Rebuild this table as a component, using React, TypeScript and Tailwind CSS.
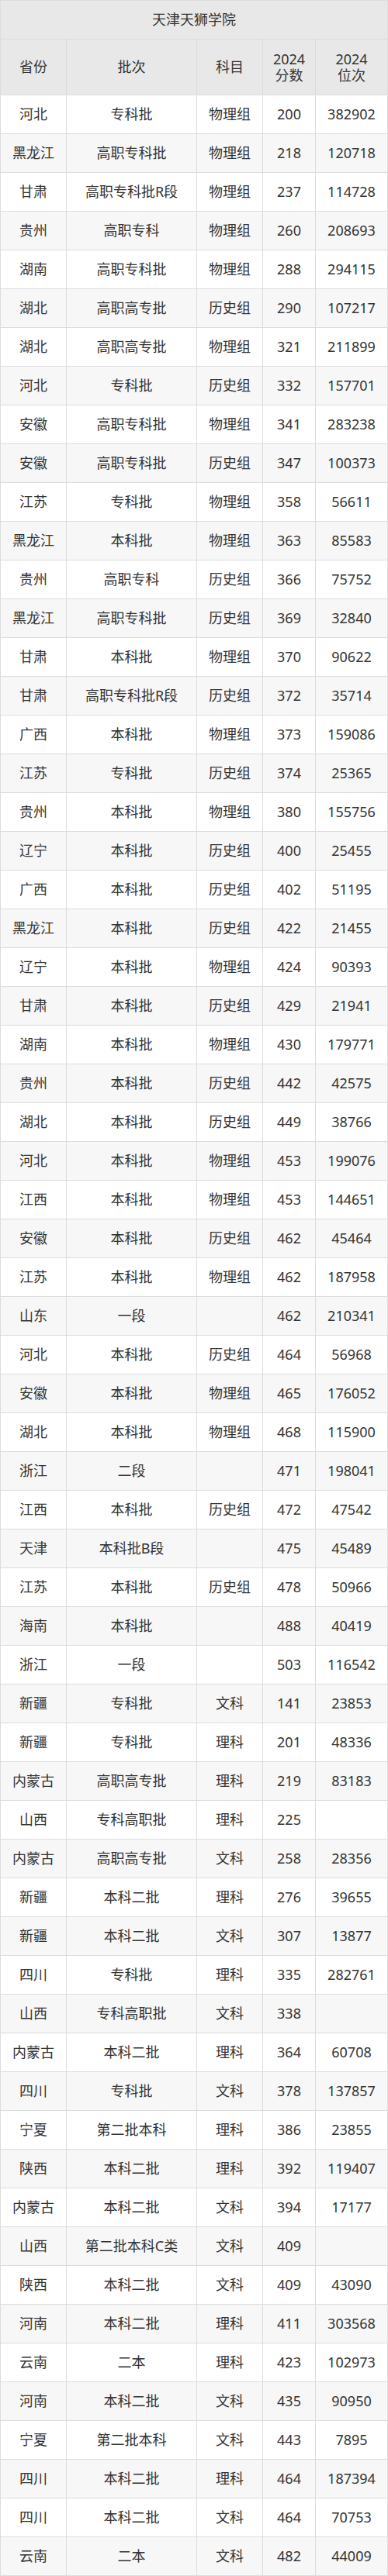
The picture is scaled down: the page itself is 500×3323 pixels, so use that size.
const rows: [string, string, string, string, string][] = [
  ["河北", "专科批", "物理组", "200", "382902"],
  ["黑龙江", "高职专科批", "物理组", "218", "120718"],
  ["甘肃", "高职专科批R段", "物理组", "237", "114728"],
  ["贵州", "高职专科", "物理组", "260", "208693"],
  ["湖南", "高职专科批", "物理组", "288", "294115"],
  ["湖北", "高职高专批", "历史组", "290", "107217"],
  ["湖北", "高职高专批", "物理组", "321", "211899"],
  ["河北", "专科批", "历史组", "332", "157701"],
  ["安徽", "高职专科批", "物理组", "341", "283238"],
  ["安徽", "高职专科批", "历史组", "347", "100373"],
  ["江苏", "专科批", "物理组", "358", "56611"],
  ["黑龙江", "本科批", "物理组", "363", "85583"],
  ["贵州", "高职专科", "历史组", "366", "75752"],
  ["黑龙江", "高职专科批", "历史组", "369", "32840"],
  ["甘肃", "本科批", "物理组", "370", "90622"],
  ["甘肃", "高职专科批R段", "历史组", "372", "35714"],
  ["广西", "本科批", "物理组", "373", "159086"],
  ["江苏", "专科批", "历史组", "374", "25365"],
  ["贵州", "本科批", "物理组", "380", "155756"],
  ["辽宁", "本科批", "历史组", "400", "25455"],
  ["广西", "本科批", "历史组", "402", "51195"],
  ["黑龙江", "本科批", "历史组", "422", "21455"],
  ["辽宁", "本科批", "物理组", "424", "90393"],
  ["甘肃", "本科批", "历史组", "429", "21941"],
  ["湖南", "本科批", "物理组", "430", "179771"],
  ["贵州", "本科批", "历史组", "442", "42575"],
  ["湖北", "本科批", "历史组", "449", "38766"],
  ["河北", "本科批", "物理组", "453", "199076"],
  ["江西", "本科批", "物理组", "453", "144651"],
  ["安徽", "本科批", "历史组", "462", "45464"],
  ["江苏", "本科批", "物理组", "462", "187958"],
  ["山东", "一段", "", "462", "210341"],
  ["河北", "本科批", "历史组", "464", "56968"],
  ["安徽", "本科批", "物理组", "465", "176052"],
  ["湖北", "本科批", "物理组", "468", "115900"],
  ["浙江", "二段", "", "471", "198041"],
  ["江西", "本科批", "历史组", "472", "47542"],
  ["天津", "本科批B段", "", "475", "45489"],
  ["江苏", "本科批", "历史组", "478", "50966"],
  ["海南", "本科批", "", "488", "40419"],
  ["浙江", "一段", "", "503", "116542"],
  ["新疆", "专科批", "文科", "141", "23853"],
  ["新疆", "专科批", "理科", "201", "48336"],
  ["内蒙古", "高职高专批", "理科", "219", "83183"],
  ["山西", "专科高职批", "理科", "225", ""],
  ["内蒙古", "高职高专批", "文科", "258", "28356"],
  ["新疆", "本科二批", "理科", "276", "39655"],
  ["新疆", "本科二批", "文科", "307", "13877"],
  ["四川", "专科批", "理科", "335", "282761"],
  ["山西", "专科高职批", "文科", "338", ""],
  ["内蒙古", "本科二批", "理科", "364", "60708"],
  ["四川", "专科批", "文科", "378", "137857"],
  ["宁夏", "第二批本科", "理科", "386", "23855"],
  ["陕西", "本科二批", "理科", "392", "119407"],
  ["内蒙古", "本科二批", "文科", "394", "17177"],
  ["山西", "第二批本科C类", "文科", "409", ""],
  ["陕西", "本科二批", "文科", "409", "43090"],
  ["河南", "本科二批", "理科", "411", "303568"],
  ["云南", "二本", "理科", "423", "102973"],
  ["河南", "本科二批", "文科", "435", "90950"],
  ["宁夏", "第二批本科", "文科", "443", "7895"],
  ["四川", "本科二批", "理科", "464", "187394"],
  ["四川", "本科二批", "文科", "464", "70753"],
  ["云南", "二本", "文科", "482", "44009"],
];

const cell = "flex items-center justify-center text-center border-r border-b border-[#dcdcdc]";

export default function App() {
  return (
    <div
      className="w-[500px] bg-white text-[18px] text-[#333333]"
      style={{ fontFamily: '"Noto Sans", "Noto Sans CJK SC", sans-serif' }}
    >
      <div className="grid grid-cols-[85px_168px_85px_68px_93px] border-l border-t border-[#dcdcdc]">
        {/* title */}
        <div className={`${cell} col-span-5 h-[50px] bg-[#e8e8e8]`}>天津天狮学院</div>

        {/* header */}
        <div className={`${cell} h-[72px] bg-[#e8e8e8]`}>省份</div>
        <div className={`${cell} h-[72px] bg-[#e8e8e8]`}>批次</div>
        <div className={`${cell} h-[72px] bg-[#e8e8e8]`}>科目</div>
        <div className={`${cell} h-[72px] bg-[#e8e8e8] leading-[21px]`}>
          2024
          <br />
          分数
        </div>
        <div className={`${cell} h-[72px] bg-[#e8e8e8] leading-[21px]`}>
          2024
          <br />
          位次
        </div>

        {rows.map((r, i) =>
          r.map((v, j) => (
            <div
              key={`${i}-${j}`}
              className={`${cell} h-[50px] ${i % 2 === 1 ? "bg-[#f7f7f7]" : "bg-white"}`}
            >
              {v}
            </div>
          ))
        )}
      </div>
    </div>
  );
}
